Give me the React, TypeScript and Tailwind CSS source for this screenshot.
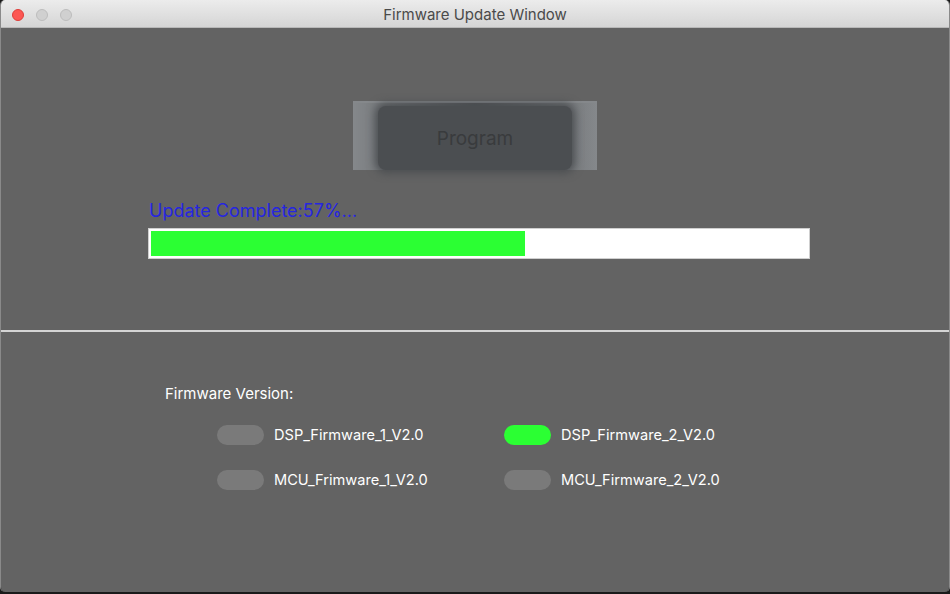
import React from "react"

const font = { fontFamily: "Inter, 'Noto Sans', sans-serif" }

function Toggle({ on }: { on?: boolean }) {
  return (
    <div
      className={
        on
          ? "h-[20px] w-[47px] rounded-full bg-[#2bff33]"
          : "h-[20px] w-[47px] rounded-full bg-[#7a7a7a]"
      }
    />
  )
}

function Option({ label, on }: { label: string; on?: boolean }) {
  return (
    <div className="flex items-center gap-[10px]">
      <Toggle on={on} />
      <span className="text-[14.6px] text-white leading-none">{label}</span>
    </div>
  )
}

export default function App() {
  return (
    <div className="h-[594px] w-[950px] overflow-hidden bg-[#1a1a1a]" style={font}>
      <div className="flex h-[592px] flex-col overflow-hidden rounded-[5px] border-x border-[#8a8a8a]">
        {/* title bar */}
        <div className="relative flex h-[28px] shrink-0 items-center justify-center border-b border-[#b8b8b8] bg-gradient-to-b from-[#ececec] to-[#d5d5d5] pt-[4px]">
          <div className="absolute left-[11px] top-[9px] flex gap-[12px]">
            <div className="h-[12px] w-[12px] rounded-full bg-[#fc5753] border border-[#df3d39]" />
            <div className="h-[12px] w-[12px] rounded-full bg-[#d0d0d0] border border-[#bdbdbd]" />
            <div className="h-[12px] w-[12px] rounded-full bg-[#d0d0d0] border border-[#bdbdbd]" />
          </div>
          <span className="text-[15px] text-[#4a4a4a]">Firmware Update Window</span>
        </div>

        {/* content */}
        <div className="flex flex-1 flex-col bg-[#636363]">
          <div className="flex h-[302px] shrink-0 flex-col">
            <div className="mt-[73px] flex justify-center">
              <button className="flex h-[69px] w-[244px] justify-center border-t-2 border-[#85888b] bg-gradient-to-r from-[#85888b] via-[#4b4e51] to-[#85888b] p-0 pt-[3px]">
                <div className="flex h-[64px] w-[194px] items-center justify-center rounded-[8px] bg-[#4b4e51] pt-[3px] shadow-[0_0_8px_3px_#4b4e51]">
                  <span className="text-[19px] text-[#393b3d]">Program</span>
                </div>
              </button>
            </div>
            <div className="ml-[148px] mt-[30px] text-[18px] leading-[22px] text-[#2626e0]">
              Update Complete:57%...
            </div>
            <div className="ml-[147px] mt-[6px] h-[31px] w-[662px] border border-[#cfcfcf] bg-white p-[2px]">
              <div className="h-full bg-[#2bff33]" style={{ width: "57%" }} />
            </div>
          </div>

          <div className="h-[2px] shrink-0 bg-[#d4d4d4]" />

          <div className="pl-[164px] pt-[54px]">
            <div className="text-[15px] leading-none text-white">Firmware Version:</div>
            <div className="ml-[52px] mt-[24px] grid w-[520px] grid-cols-[287px_1fr] gap-y-[25px]">
              <Option label="DSP_Firmware_1_V2.0" />
              <Option label="DSP_Firmware_2_V2.0" on />
              <Option label="MCU_Frimware_1_V2.0" />
              <Option label="MCU_Firmware_2_V2.0" />
            </div>
          </div>
        </div>
      </div>
    </div>
  )
}
